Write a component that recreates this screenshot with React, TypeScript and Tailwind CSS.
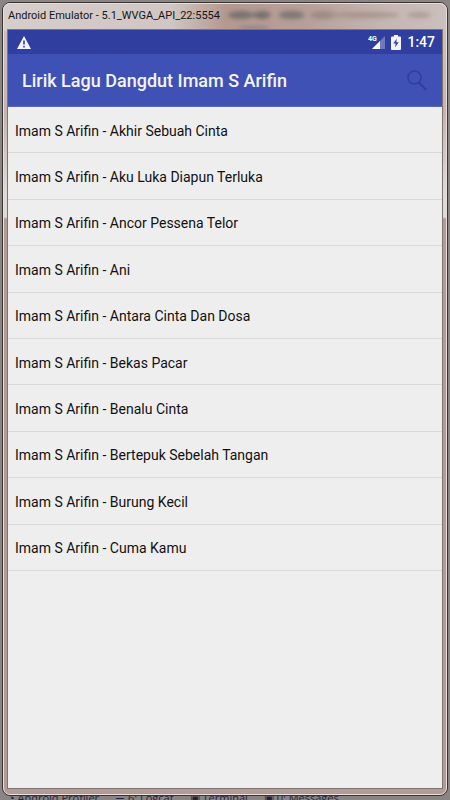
import React from 'react'

const songs = [
  'Akhir Sebuah Cinta',
  'Aku Luka Diapun Terluka',
  'Ancor Pessena Telor',
  'Ani',
  'Antara Cinta Dan Dosa',
  'Bekas Pacar',
  'Benalu Cinta',
  'Bertepuk Sebelah Tangan',
  'Burung Kecil',
  'Cuma Kamu',
]

// blurred shapes that shine through the glass title bar
const smudges = [
  { x: 239, y: 14, rx: 13, ry: 4, fill: '#777270' },
  { x: 260, y: 14, rx: 9, ry: 4, fill: '#737170' },
  { x: 290, y: 14, rx: 13, ry: 4, fill: '#7d7775' },
  { x: 252, y: 27, rx: 16, ry: 2, fill: '#8f8380' },
  { x: 322, y: 14, rx: 14, ry: 4, fill: '#9e8983' },
  { x: 362, y: 14, rx: 36, ry: 3, fill: '#a8948e' },
  { x: 418, y: 14, rx: 12, ry: 3, fill: '#b09b96' },
]

function StatusBar() {
  return (
    <div className="flex h-6 items-center justify-between bg-[#303f9f] pl-[9px] pr-[7px] text-white">
      <svg width="14" height="13" viewBox="0 0 14 13" aria-hidden="true">
        <path d="M7 0 14 13H0Z" fill="#f4f4f8" />
        <path d="M6.2 4.6h1.6v4H6.2zM6.2 9.8h1.6v1.6H6.2z" fill="#303f9f" />
      </svg>
      <div className="flex items-center gap-[6px]">
        <svg width="17" height="15" viewBox="0 0 17 15" aria-hidden="true">
          <path d="M17 1v13H4Z" fill="#6f7abd" />
          <path d="M12 6v8H4Z" fill="#ffffff" />
          <text x="0" y="6" fontSize="7" fontWeight="700" fontFamily="Roboto, sans-serif" fill="#ffffff">4G</text>
        </svg>
        <svg width="10" height="15" viewBox="0 0 10 15" aria-hidden="true">
          <path d="M3 0h4v1.5h2a1 1 0 0 1 1 1V14a1 1 0 0 1-1 1H1a1 1 0 0 1-1-1V2.5a1 1 0 0 1 1-1h2Z" fill="#f4f4f8" />
          <path d="M5.8 3.5 2.3 8.6h2.4L4 12.5l3.7-5.3H5.3Z" fill="#303f9f" />
        </svg>
        <span className="text-sm font-medium leading-none">1:47</span>
      </div>
    </div>
  )
}

function AppBar() {
  return (
    <header className="flex h-[53px] items-center justify-between border-b border-[#5866b8] bg-[#3f51b5] pl-[14px] pr-[15px]">
      <h1 className="pt-[2px] text-lg font-medium text-[#f4f4f8]">Lirik Lagu Dangdut Imam S Arifin</h1>
      <button type="button" aria-label="Search" className="text-[#303f9f]">
        <svg width="20" height="21" viewBox="0 0 20 21" fill="none" stroke="currentColor" aria-hidden="true">
          <circle cx="7.5" cy="7.5" r="6.5" strokeWidth="1.6" />
          <path d="m12 12.5 7.3 7.5" strokeWidth="2.2" />
        </svg>
      </button>
    </header>
  )
}

function ToolTabs() {
  return (
    <div className="flex h-1 items-center gap-4 overflow-hidden pl-2 font-['Open_Sans',sans-serif] text-[11px] text-[#26233a]">
      <span>◔ Android Profiler</span>
      <span>☰ 6: Logcat</span>
      <span>▣ Terminal</span>
      <span>▣ 0: Messages</span>
    </div>
  )
}

export default function App() {
  return (
    <div className="flex min-h-screen flex-col overflow-hidden bg-[#8a8482] pt-[2px] font-[Roboto,sans-serif]">
      <div className="relative mx-[2px] flex flex-1 flex-col overflow-hidden rounded-lg border border-[#393535] bg-[linear-gradient(to_bottom,#cdc3c0_0px,#c4b4b0_110px,#dedad8_190px,#dedad8_214px,#b39c97_216px)]">
        <div className="absolute inset-x-0 top-0 h-7 bg-[linear-gradient(to_right,#d6cecb_0%,#d0c6c3_38%,#b5998f_50%,#b79f98_68%,#c4b5b1_85%,#cbc0bd_100%)]" />
        <svg className="absolute inset-x-0 top-0 h-[30px] w-full blur-[2px]" viewBox="0 0 446 30" preserveAspectRatio="none" aria-hidden="true">
          {smudges.map((s, i) => (
            <ellipse key={i} cx={s.x} cy={s.y - 2} rx={s.rx} ry={s.ry} fill={s.fill} />
          ))}
        </svg>
        <div className="relative flex flex-1 flex-col rounded-[7px] border border-[#e6dfdd] px-[3px] pb-[5px]">
          <div className="h-[25px] pl-px text-[11px] leading-[24px] text-[#15151c]">
            Android Emulator - 5.1_WVGA_API_22:5554
          </div>
          <main className="flex flex-1 flex-col border border-[#7d7371] bg-[#eeeeee]">
            <StatusBar />
            <AppBar />
            <ul className="grid h-[464px] auto-rows-fr">
              {songs.map(song => (
                <li key={song} className="flex items-center border-b border-[#d9d9d9] px-[7px] pt-[2px] text-sm text-[#111111]">
                  Imam S Arifin - {song}
                </li>
              ))}
            </ul>
          </main>
        </div>
      </div>
      <ToolTabs />
    </div>
  )
}
